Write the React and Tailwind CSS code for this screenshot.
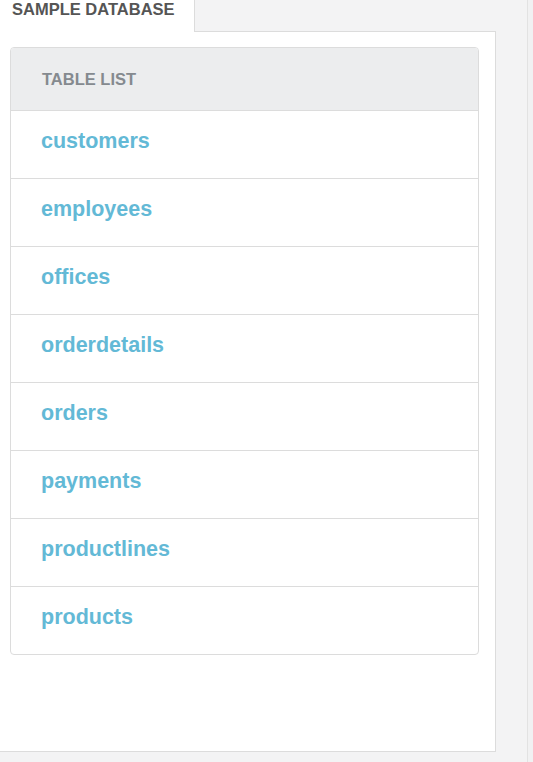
const tables = [
  'customers',
  'employees',
  'offices',
  'orderdetails',
  'orders',
  'payments',
  'productlines',
  'products',
];

export default function App() {
  return (
    <div className="w-[533px] h-[762px] bg-[#f3f3f4] flex overflow-hidden" style={{ fontFamily: '"Liberation Sans", Arial, sans-serif' }}>
      <div className="w-[496px] flex flex-col">
        <div className="flex h-[32px] flex-shrink-0">
          <div className="w-[194px] bg-white pl-[12px] text-[16.5px] leading-[18px] font-bold text-[#555] uppercase">
            Sample Database
          </div>
          <div className="flex-1 border-l border-b border-[#dcdcdc] bg-[#f3f3f4]" />
        </div>

        <div className="h-[720px] bg-white border-r border-b border-[#dcdcdc] pt-[15px] pl-[10px] pr-[16px]">
          <div className="border border-[#dcdcdc] rounded-[4px] overflow-hidden">
            <div className="h-[62px] bg-[#ecedee] pl-[31px] pt-[22px] text-[16.5px] leading-[19px] font-bold text-[#858a8f] uppercase">
              Table list
            </div>
            {tables.map((t) => (
              <div key={t} className="h-[68px] border-t border-[#dcdcdc] pl-[30px] pt-[18px]">
                <a href="#" className="text-[21.5px] leading-[25px] font-bold text-[#63b9d6]">{t}</a>
              </div>
            ))}
          </div>
        </div>
      </div>
      <div className="flex-1" />
      <div className="w-[6px] border-l border-[#e2e2e2] bg-[#f1f1f2]" />
    </div>
  );
}
